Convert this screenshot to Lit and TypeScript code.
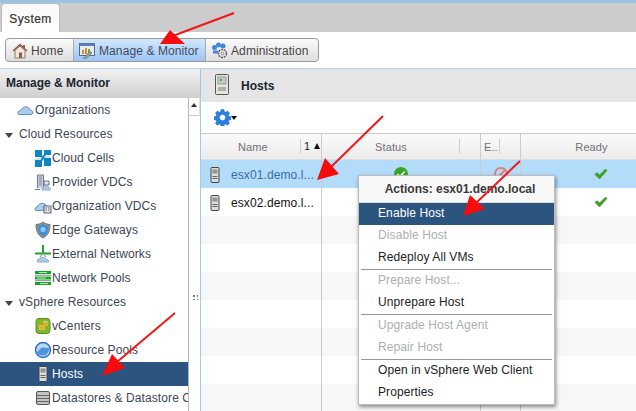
import { LitElement, html, css, svg } from "lit";
import { customElement } from "lit/decorators.js";

const cloud = svg`<path d="M1.500 13.500c-1.500-2 .2-4.200 2.300-3.900C4.800 6.500 8 5.200 10.500 6.200c1.700.6 2.800 1.800 3.100 3.200 1.800 0 2.900 1.200 2.300 2.700-.3.900-1 1.400-2 1.400H3c-.6 0-1.100 0-1.500 0z" fill="#a9cdee" stroke="#6d8fb3"/>`;
const icons: Record<string, unknown> = {
  org: html`<svg width="18" height="18" viewBox="0 0 18 18">${cloud}</svg>`,
  cells: html`<svg width="18" height="18" viewBox="0 0 18 18"><rect x="1" y="1" width="7" height="7" fill="#0d86c6"/><rect x="10" y="1" width="7" height="5" fill="#0d86c6"/><rect x="1" y="11" width="7" height="7" fill="#0d86c6"/><rect x="10" y="9" width="7" height="8" fill="#0d86c6"/><path d="M6 6l6 5M12 4l-5 8" stroke="#0d86c6" stroke-width="2"/><path d="M1 10h6M10 8h6" stroke="#9fd0ea"/></svg>`,
  provider: html`<svg width="18" height="18" viewBox="0 0 18 18"><path d="M3.500 15V2h6v13" fill="#cfd3e0" stroke="#6e7590"/><path d="M5 4h3M5 6h3M5 8h3M5 10h3M5 12h3" stroke="#7d84a0"/><path d="M10 8h5v4h-5z" fill="#dfe2ea" stroke="#6e7590"/><path d="M1 16.500h5" stroke="#6e7590"/><path d="M8 17c-.8-2 .8-3.500 2.300-3 1-2 4-1.500 4.200.5 1.700 0 2.200 1.500 1.500 2.500z" fill="#a9cdee" stroke="#7b9cc0" stroke-width=".8"/></svg>`,
  orgvdc: html`<svg width="18" height="18" viewBox="0 0 18 18"><path d="M1.500 13.500c-1.300-1.800 0-3.800 2-3.600.7-3 4-4.200 6.500-3.300 1.500.5 2.500 1.500 2.900 2.700H10v4.200z" fill="#a9cdee" stroke="#6d8fb3"/><rect x="10" y="9" width="7" height="7" fill="#e4e6ec" stroke="#5f6678"/><path d="M11.500 11h1.500M14 11h1.500M11.500 13h1.500M14 13h1.500" stroke="#5f6678"/></svg>`,
  edge: html`<svg width="18" height="18" viewBox="0 0 18 18"><path d="M2 3.500c2.500 0 5-1 7-2.500 2 1.500 4.500 2.500 7 2.500 0 6-1.500 10.500-7 13.500C3.500 14 2 9.500 2 3.500z" fill="#8a9096" stroke="#70767c"/><path d="M4 5c2 0 3.500-.8 5-1.800C10.500 4.200 12 5 14 5c0 4.500-1 8-5 10.300C5 13 4 9.500 4 5z" fill="#3f8fdc"/><circle cx="9" cy="8.500" r="2.500" fill="#9cc9f0"/></svg>`,
  ext: html`<svg width="18" height="18" viewBox="0 0 18 18"><path d="M9 0v8M1 8.500h16" stroke="#1fa52c" stroke-width="2"/><path d="M9 8l-3 4M9 8l3 4" stroke="#888"/><path d="M3.500 17c-1-2 .5-3.500 2-3 1-2.500 5.500-2.500 6.500.3 2-.3 3 1.300 2.500 2.700z" fill="#a9cdee" stroke="#7b9cc0" stroke-width=".8"/></svg>`,
  pools: html`<svg width="18" height="18" viewBox="0 0 18 18"><path d="M1 3.500h16M1 9h16M1 14.500h16" stroke="#19a52a" stroke-width="3"/><path d="M5 3.500h8M3 9h9M6 14.500h8" stroke="#bfe6c4"/><path d="M1 6.200h16M1 11.700h16" stroke="#5e6e5e" stroke-width=".8"/></svg>`,
  vc: html`<svg width="18" height="18" viewBox="0 0 18 18"><rect x="2" y="1.500" width="14" height="15" rx="3" fill="#7fb82a" stroke="#5f8f1c"/><path d="M9 4h4.500v5H11v4H5V8h4z" fill="#fff" opacity=".5"/><rect x="9" y="5" width="4" height="4" fill="#f2a81d"/><rect x="5.500" y="8.500" width="5" height="4" fill="#f2a81d"/></svg>`,
  rp: html`<svg width="18" height="18" viewBox="0 0 18 18"><circle cx="9" cy="9" r="7.500" fill="#b9d7f4" stroke="#2d72bf" stroke-width="1.500"/><path d="M2 12c2.500-1 3.500-5 6.500-5.500 2-.3 3.500 1 7 .5-.5 4-3 7.500-6.500 7.500-3 0-5.500-1-7-2.500z" fill="#4c94dc"/></svg>`,
  ds: html`<svg width="18" height="18" viewBox="0 0 18 18"><rect x="2.500" y="2.500" width="13" height="13" rx="1.500" fill="#c4c4c4" stroke="#555"/><path d="M3 6.500h12M3 9.500h12M3 12.500h12" stroke="#666"/></svg>`,
  host: html`<svg width="12" height="18" viewBox="0 0 12 18"><rect x="2" y="1.500" width="8" height="15" rx="1" fill="#dcdcdc" stroke="#444"/><rect x="3.500" y="3.500" width="5" height="4" fill="#8f9692"/><path d="M3.500 10.500h5M3.500 12.500h5" stroke="#666"/></svg>`,
};

const bigHost = html`<svg width="16" height="22" viewBox="0 0 16 22"><rect x=".5" y=".5" width="13" height="20" rx="1" fill="#e6e6e0" stroke="#555"/><rect x="3" y="3" width="8" height="7" fill="#c5cbc5" stroke="#999"/><rect x="5" y="5" width="2" height="2" fill="#5a9a5a"/><path d="M3 14h8M3 16h8" stroke="#777"/></svg>`;

const gear = html`<svg width="17" height="17" viewBox="0 0 17 17"><path d="M8.500 4.800a3.700 3.700 0 1 0 0 7.400 3.700 3.700 0 0 0 0-7.400z" fill="#fff"/><path fill-rule="evenodd" clip-rule="evenodd" d="M7 .5h3l.4 2.200 1.300.5L13.600 2l2 2-1.200 1.900.6 1.300 2 .5v3l-2.100.4-.5 1.300 1.200 1.800-2.100 2.100-1.800-1.200-1.300.5-.4 2.100H7l-.5-2.100-1.300-.5-1.800 1.200-2-2.100 1.200-1.800-.6-1.300L0 10.700v-3l2-.5.600-1.300L1.400 4l2-2 1.900 1.200 1.300-.5zM8.500 5.500a3 3 0 1 0 0 6 3 3 0 0 0 0-6z" fill="#2a7fdc" stroke="#1a5fb0" stroke-width=".4"/></svg>`;

const check = html`<svg width="14" height="12" viewBox="0 0 14 12"><path d="M1 6.500l2-2 2.500 2.500L11.500 1 13 2.500 5.500 11z" fill="#3fa31f" stroke="#2f8a17" stroke-width=".5"/></svg>`;
const whiteCheck = html`<svg width="10" height="9" viewBox="0 0 14 12"><path d="M1 6.500l2-2 2.500 2.500L11.500 1 13 2.500 5.500 11z" fill="#fff"/></svg>`;

const homeIcon = html`<svg width="16" height="16" viewBox="0 0 16 16"><path d="M3 7.500V15h10V7.500L8 3z" fill="#f1eadb" stroke="#8a7a66"/><path d="M1 8l7-6.500L15 8" fill="none" stroke="#95584c" stroke-width="1.600"/><rect x="7" y="9.500" width="3" height="5.500" fill="#95584c"/><rect x="11" y="2" width="2" height="3.500" fill="#95584c"/></svg>`;
const monIcon = html`<svg width="17" height="17" viewBox="0 0 17 17"><rect x=".5" y="1.500" width="15" height="12" fill="#e6edf6" stroke="#55698a"/><rect x=".5" y="1.500" width="15" height="2.500" fill="#5f7fae"/><path d="M4 12V8M7 12V6" stroke="#e08a2a" stroke-width="2"/><path d="M10 12V7" stroke="#5fae3a" stroke-width="2"/><path d="M4 16.500l7-7 2 1.500-7 6.500z" fill="#a5a5a5" stroke="#666" stroke-width=".7"/></svg>`;
const adminIcon = html`<svg width="17" height="17" viewBox="0 0 17 17"><circle cx="3.500" cy="5.500" r="2.500" fill="#3f86dc"/><circle cx="7.500" cy="3" r="2.500" fill="#3f86dc"/><circle cx="12" cy="4" r="2.500" fill="#3f86dc"/><path d="M2 8.500h5v3H2z" fill="#3f86dc"/><circle cx="11.500" cy="11.500" r="4" fill="#e6e6e6" stroke="#666" stroke-width="1.500" stroke-dasharray="2 .8"/><circle cx="11.500" cy="11.500" r="1.300" fill="#fff" stroke="#666" stroke-width=".7"/></svg>`;

const tree: [number, string, string?][] = [
  [1, "Organizations", "org"],
  [0, "Cloud Resources"],
  [2, "Cloud Cells", "cells"],
  [2, "Provider VDCs", "provider"],
  [2, "Organization VDCs", "orgvdc"],
  [2, "Edge Gateways", "edge"],
  [2, "External Networks", "ext"],
  [2, "Network Pools", "pools"],
  [0, "vSphere Resources"],
  [2, "vCenters", "vc"],
  [2, "Resource Pools", "rp"],
  [2, "Hosts", "host"],
  [2, "Datastores & Datastore Clusters", "ds"],
];

const menu: ([string, boolean?] | null)[] = [
  ["Enable Host", false],
  ["Disable Host", true],
  ["Redeploy All VMs", false],
  null,
  ["Prepare Host...", true],
  ["Unprepare Host", false],
  null,
  ["Upgrade Host Agent", true],
  ["Repair Host", true],
  null,
  ["Open in vSphere Web Client", false],
  ["Properties", false],
];

const arrows: [string, string][] = [
  ["234,13 170,37", "160,44 185,44 170,30"],
  ["383,116 331,167", "317,180 339,174 325,158"],
  ["520,161 476,203", "463,216 485,209 470,195"],
  ["175,313 117,362", "102,376 125,368 112,354"],
];

@customElement("app-root")
export class AppRoot extends LitElement {
  static styles = css`
    :host {
      display: block;
      position: relative;
      width: 636px;
      height: 411px;
      overflow: hidden;
      background: #fff;
      font-family: "Liberation Sans", Arial, sans-serif;
      font-size: 12px;
      letter-spacing: 0.1px;
      color: #333;
    }
    .tabbar { height: 29px; border-top: 3px solid #9cc3e0; background: #ccc; padding-left: 1px; display: flex; align-items: flex-end; }
    .tab { width: 59px; height: 29px; padding-top: 1px; box-sizing: border-box; background: linear-gradient(#f8f8f8, #fff); border: 1px solid #bbb; border-bottom: none; border-radius: 4px 4px 0 0; letter-spacing: 0.4px; color: #333; display: flex; align-items: center; justify-content: center; -webkit-text-stroke: 0.2px #333; }
    .nav { height: 36px; box-sizing: border-box; padding: 6px 5px 0; }
    .btns { display: inline-flex; height: 24px; box-sizing: border-box; border: 1px solid #9a9a9a; border-radius: 4px; overflow: hidden; background: linear-gradient(#fbfbfb, #dedede); }
    .btn { display: flex; align-items: center; gap: 3px; box-sizing: border-box; padding: 1px 0 0 5px; color: #444; border-right: 1px solid #aaa; }
    .btn:last-child { border-right: none; }
    .btn.home { width: 68px; padding-left: 6px; }
    .btn.mon { width: 132px; }
    .btn.admin { width: 112px; }
    .btn.on { background: linear-gradient(#d3e7fb, #9cc5f5); color: #3f4a5f; }
    .main { display: flex; height: 343px; border-top: 1px solid #b8d0e4; box-sizing: border-box; }
    .left { width: 201px; flex: none; border-right: 1px solid #a8c7e0; box-sizing: border-box; display: flex; flex-direction: column; position: relative; }
    .lhead { height: 29px; flex: none; box-sizing: border-box; padding: 0 0 2px 6px; background: linear-gradient(#f2f2f2, #cfcfcf); display: flex; align-items: center; font-weight: 700; color: #1b2430; letter-spacing: 0; }
    .lbody { flex: 1; display: flex; min-height: 0; }
    .tree { width: 188px; flex: none; overflow: hidden; }
    .row { height: 24px; display: flex; align-items: center; white-space: nowrap; color: #3c4654; }
    .row.l1 { padding-left: 17px; }
    .row.l0 { padding-left: 5px; }
    .row.l2 { padding-left: 34px; }
    .row.sel { background: #2b547e; color: #fff; }
    .ic { width: 18px; height: 18px; display: flex; align-items: center; justify-content: center; flex: none; }
    .tw { width: 0; height: 0; border: 4.500px solid transparent; border-top: 5px solid #444; border-bottom: none; margin-right: 6px; margin-top: 2px; }
    .scroll { width: 12px; flex: none; border-left: 1px solid #b5b5b5; box-sizing: border-box; position: relative; background: #fff; }
    .sbtn { height: 18px; border-bottom: 1px solid #ccc; border-right: 1px solid #e2e2e2; display: flex; justify-content: center; padding-top: 5px; box-sizing: border-box; }
    .sbtn i { width: 0; height: 0; border: 3.500px solid transparent; border-bottom: 4px solid #333; border-top: none; }
    .grip { position: absolute; left: 3px; top: 196px; width: 6px; height: 6px; background-image: radial-gradient(#777 1px, transparent 1px); background-size: 4px 4px; }
    .right { flex: 1; display: flex; flex-direction: column; min-width: 0; }
    .rhead { height: 33px; flex: none; background: #e5e5e5; display: flex; align-items: center; padding-left: 14px; gap: 10px; font-weight: 700; color: #1b2430; letter-spacing: 0; }
    .rhead svg { margin-top: -2px; }
    .tools { height: 31px; flex: none; display: flex; align-items: center; padding-left: 13px; }
    .caret { width: 0; height: 0; border: 3.500px solid transparent; border-top: 4px solid #111; border-bottom: none; margin-top: 1px; }
    .hrow, .trow { display: grid; grid-template-columns: 121px 159px 40px 1fr; flex: none; }
    .hrow { height: 25px; background: linear-gradient(#fafafa, #ececec); border-top: 1px solid #ccc; border-bottom: 1px solid #ddd; color: #6d7278; font-size: 11px; }
    .hc { border-right: 1px solid #ccc; position: relative; display: flex; align-items: center; justify-content: center; height: 100%; }
    .hc:last-child { border-right: none; padding-left: 26px; }
    .hc.name { justify-content: flex-start; padding-left: 37px; }
    .hc.st { padding-right: 20px; }
    .hc.e { padding-right: 20px; justify-content: flex-start; padding-left: 3px; }
    .sub { position: absolute; top: 5px; bottom: 5px; width: 1px; background: #ccc; }
    .hc.name .sub { left: 99px; }
    .hc.st .sub, .hc.e .sub { right: 20px; }
    .sort { position: absolute; right: 1px; top: 6px; color: #222; display: flex; align-items: center; gap: 4px; letter-spacing: 0; }
    .sort i { width: 0; height: 0; border: 3px solid transparent; border-bottom: 6px solid #111; border-top: none; }
    .trow { height: 28px; }
    .trow > div { border-right: 1px solid #ccc; display: flex; align-items: center; justify-content: center; overflow: hidden; }
    .trow > div:last-child { border-right: none; padding-left: 44px; }
    .trow .nm { justify-content: flex-start; padding: 1px 0 0 8px; gap: 10px; color: #111; white-space: nowrap; }
    .trow.alt { background: #f7f7f7; }
    .trow.hi { background: #b3dcfb; }
    .trow.hi .nm { color: #3a6ea5; }
    .ok { width: 14px; height: 14px; border-radius: 50%; background: #3aa521; display: flex; align-items: center; justify-content: center; }
    .no { width: 14px; height: 14px; box-sizing: border-box; border-radius: 50%; border: 2px solid #de7f7f; position: relative; }
    .no::after { content: ""; position: absolute; left: 4px; top: -1px; width: 2px; height: 12px; background: #de7f7f; transform: rotate(45deg); }
    .menu { position: absolute; left: 358px; top: 175px; width: 197px; height: 230px; box-sizing: border-box; background: #fff; border: 1px solid #bbb; box-shadow: 1px 2px 4px rgba(0,0,0,.45); display: flex; flex-direction: column; }
    .mt { height: 27px; flex: none; box-sizing: border-box; background: #f8f8f8; border-bottom: 1px solid #ddd; padding-left: 7px; display: flex; align-items: center; justify-content: center; font-weight: 700; color: #3a3a3a; letter-spacing: 0; }
    .mi { height: 22px; flex: none; box-sizing: border-box; display: flex; align-items: center; padding: 0 0 2px 19px; color: #222; }
    .mi.off { color: #aab0b0; }
    .mi.on { background: #2b547e; color: #fff; }
    .sep { height: 1px; flex: none; margin: 0 2px; background: #999; }
    .arrows { position: absolute; left: 0; top: 0; pointer-events: none; }
  `;

  render() {
    return html`
      <div class="tabbar"><div class="tab">System</div></div>
      <div class="nav">
        <div class="btns">
          <div class="btn home">${homeIcon}Home</div>
          <div class="btn mon on">${monIcon}Manage &amp; Monitor</div>
          <div class="btn admin">${adminIcon}Administration</div>
        </div>
      </div>
      <div class="main">
        <div class="left">
          <div class="lhead">Manage &amp; Monitor</div>
          <div class="lbody">
            <div class="tree">
              ${tree.map(([lvl, label, ic]) => html`
                <div class="row l${lvl} ${label === "Hosts" ? "sel" : ""}">
                  ${lvl === 0 ? html`<span class="tw"></span>` : html`<span class="ic">${icons[ic as string]}</span>`}${label}
                </div>`)}
            </div>
            <div class="scroll"><div class="sbtn"><i></i></div><div class="grip"></div></div>
          </div>
        </div>
        <div class="right">
          <div class="rhead">${bigHost}Hosts</div>
          <div class="tools">${gear}<span class="caret"></span></div>
          <div class="hrow">
            <div class="hc name">Name<span class="sub"></span><span class="sort">1<i></i></span></div>
            <div class="hc st">Status<span class="sub"></span></div>
            <div class="hc e">E..<span class="sub"></span></div>
            <div class="hc">Ready</div>
          </div>
          <div class="trow hi">
            <div class="nm">${icons.host}esx01.demo.l...</div>
            <div><span class="ok">${whiteCheck}</span></div>
            <div><span class="no"></span></div>
            <div>${check}</div>
          </div>
          <div class="trow">
            <div class="nm">${icons.host}esx02.demo.l...</div>
            <div></div><div></div><div>${check}</div>
          </div>
          ${[0, 1, 2, 3, 4, 5, 6].map((i) => html`<div class="trow ${i % 2 ? "" : "alt"}"><div></div><div></div><div></div><div></div></div>`)}
        </div>
      </div>
      <div class="menu">
        <div class="mt">Actions: esx01.demo.local</div>
        ${menu.map((m) => m === null
          ? html`<div class="sep"></div>`
          : html`<div class="mi ${m[1] ? "off" : ""} ${m[0] === "Enable Host" ? "on" : ""}">${m[0]}</div>`)}
      </div>
      <svg class="arrows" width="636" height="411" viewBox="0 0 636 411">
        ${arrows.map(([l, h]) => svg`<polyline points="${l}" fill="none" stroke="#f01818" stroke-width="2"/><polygon points="${h}" fill="#f60c0c"/>`)}
      </svg>
    `;
  }
}
